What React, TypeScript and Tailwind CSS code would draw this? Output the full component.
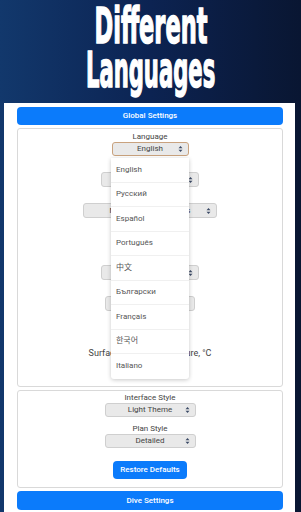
import React from "react";

const languages: { label: string; cjk?: string }[] = [
  { label: "English" },
  { label: "Русский" },
  { label: "Español" },
  { label: "Português" },
  { label: "中文", cjk: "'Noto Sans CJK SC'" },
  { label: "Български" },
  { label: "Français" },
  { label: "한국어", cjk: "'Noto Sans CJK KR'" },
  { label: "Italiano" },
];

const Arrows = () => (
  <svg width="5" height="8" viewBox="0 0 5 8" className="absolute right-[5px] top-1/2 -translate-y-1/2">
    <path d="M2.5 1 L4.5 3.2 H0.5 Z" fill="#3b4a66" />
    <path d="M2.5 7 L4.5 4.8 H0.5 Z" fill="#3b4a66" />
  </svg>
);

interface SelectProps {
  value?: string;
  width: string;
  height?: string;
  focused?: boolean;
}

const FakeSelect: React.FC<SelectProps> = ({ value, width, height = "h-[15px]", focused }) => {
  return (
    <div
      className={`relative ${width} ${height} mx-auto flex items-center justify-center rounded-[3px] border bg-[#e9e9e9] text-[8px] leading-none text-[#444] ${
        focused ? "border-[#c9a27e]" : "border-[#cfcfcf]"
      }`}
    >
      <span className="whitespace-nowrap">{value}</span>
      <Arrows />
    </div>
  );
};

const Label = ({ text, size = "text-[8px]" }: { text?: string; size?: string }) => (
  <div className={`h-[10px] ${size} leading-[10px] text-center text-[#444] whitespace-nowrap`}>{text}</div>
);

const BlueButton = ({ text, h = "h-[18px]" }: { text: string; h?: string }) => (
  <div className={`${h} w-full rounded-[4px] bg-[#0b7bfb] flex items-center justify-center text-[8px] font-medium text-white`}>
    {text}
  </div>
);

export default function App() {
  return (
    <div
      className="w-[301px] h-[512px] overflow-hidden bg-gradient-to-r from-[#12386c] via-[#0c2352] to-[#091632] flex flex-col"
      style={{ fontFamily: "Roboto, 'Liberation Sans', sans-serif" }}
    >
      {/* title */}
      <div
        className="h-[103px] flex flex-col items-center pt-[4px] text-white font-bold text-[50px] leading-[44px] [-webkit-text-stroke:1.5px_white]"
        style={{ fontFamily: "'DejaVu Sans Condensed', 'DejaVu Sans', sans-serif" }}
      >
        <span className="block scale-x-[0.5] whitespace-nowrap">Different</span>
        <span className="block scale-x-[0.47] whitespace-nowrap">Languages</span>
      </div>

      <div className="ml-[4px] w-[291px] flex-1 bg-white pt-[4px] pl-[13px] pr-[12px] flex flex-col gap-[3px]">
        <BlueButton text="Global Settings" />

        <div className="rounded-[3px] border border-[#d9d9d9] pt-[3px] pb-[13px] flex flex-col gap-[6px]">
          <div className="relative flex flex-col">
            <Label text="Language" />
            <FakeSelect value="English" width="w-[77px]" height="h-[14px]" focused />
            <div className="absolute left-1/2 -translate-x-1/2 top-[26px] w-[78px] z-10 rounded-b-[3px] bg-white shadow-[0_1px_4px_rgba(0,0,0,0.22)] flex flex-col">
              {languages.map((lang, i) => (
                <div
                  key={lang.label}
                  className={`h-[24.5px] pl-[5px] flex items-center text-[8px] text-[#555] ${
                    i < languages.length - 1 ? "border-b border-[#f0f0f0]" : ""
                  }`}
                  style={lang.cjk ? { fontFamily: `Roboto, ${lang.cjk}, sans-serif` } : undefined}
                >
                  {lang.label}
                </div>
              ))}
            </div>
          </div>
          <div className="flex flex-col">
            <Label />
            <FakeSelect width="w-[98px]" />
          </div>
          <div className="flex flex-col">
            <Label />
            <FakeSelect value="Metric, meters, Celsius" width="w-[134px]" />
          </div>
          <div className="flex flex-col">
            <Label />
            <FakeSelect width="w-[60px]" />
          </div>
          <div className="flex flex-col">
            <Label />
            <FakeSelect width="w-[98px]" />
          </div>
          <div className="flex flex-col">
            <Label />
            <FakeSelect width="w-[90px]" />
          </div>
          <div className="flex flex-col">
            <Label />
            <FakeSelect width="w-[60px]" />
          </div>
          <div className="flex flex-col">
            <Label text="Surface Water Temperature, °C" size="text-[9px]" />
            <FakeSelect width="w-[60px]" />
          </div>
        </div>

        <div className="rounded-[3px] border border-[#d9d9d9] pt-[2px] pb-[8px] flex flex-col items-center">
          <Label text="Interface Style" />
          <FakeSelect value="Light Theme" width="w-[91px]" height="h-[14px]" />
          <div className="h-[7px]" />
          <Label text="Plan Style" />
          <FakeSelect value="Detailed" width="w-[91px]" height="h-[14px]" />
          <div className="h-[13px]" />
          <div className="w-[74px]">
            <BlueButton text="Restore Defaults" />
          </div>
        </div>

        <BlueButton text="Dive Settings" h="h-[19px]" />
      </div>
    </div>
  );
}
